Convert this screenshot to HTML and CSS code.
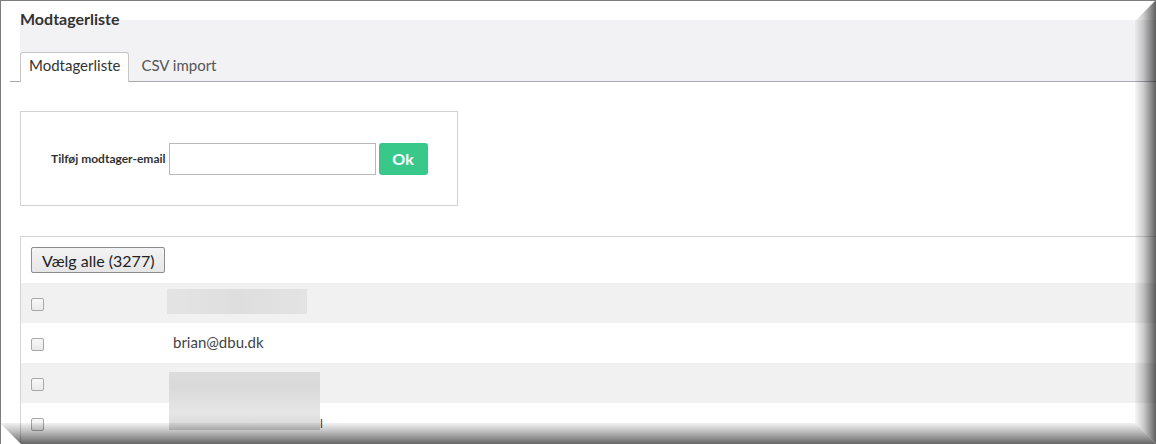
FILE: index.html
```html
<!DOCTYPE html>
<html>
<head>
    <title>Modtagerliste</title>
    <meta charset="utf-8">
    <link rel="stylesheet" href="styles.css">
</head>
<body>
<div class="screen">

    <div class="header">
        <h1 class="title">Modtagerliste</h1>
        <div class="tabs">
            <a class="tab active" href="#">Modtagerliste</a>
            <a class="tab" href="#">CSV import</a>
        </div>
    </div>

    <div class="content">
        <div class="add-box">
            <label for="email">Tilføj modtager-email</label>
            <input id="email" type="text">
            <button class="ok">Ok</button>
        </div>

        <div class="list">
            <button class="select-all">Vælg alle (3277)</button>

            <div class="rows">
                <div class="row">
                    <span class="check"></span>
                    <span class="email"></span>
                </div>
                <div class="row">
                    <span class="check"></span>
                    <span class="email">brian@dbu.dk</span>
                </div>
                <div class="row">
                    <span class="check"></span>
                    <span class="email"></span>
                </div>
                <div class="row">
                    <span class="check"></span>
                    <span class="email"><span class="tail">l</span></span>
                </div>

                <!-- redacted addresses -->
                <div class="blur blur-one"></div>
                <div class="blur blur-two"></div>
            </div>
        </div>
    </div>

    <!-- screenshot frame -->
    <div class="bevel-right"></div>
    <div class="bevel-bottom"></div>
</div>
</body>
</html>
```

FILE: styles.css
```css
body {
    margin: 0;
    padding: 0;
    background: #fff;
    font-family: Lato, "Liberation Sans", sans-serif;
    color: #333;
}

.screen {
    position: relative;
    width: 1156px;
    height: 444px;
    overflow: hidden;
    box-sizing: border-box;
    border-top: 1px solid #7d7d7d;
    border-left: 1px solid #7d7d7d;
}

.header {
    margin-left: 19px;
    background: linear-gradient(#fff 0, #fff 19px, #f2f2f4 19px);
}

.title {
    margin: 0;
    padding-top: 8px;
    font-size: 16px;
    line-height: 20px;
    font-weight: bold;
    color: #333;
}

.tabs {
    display: flex;
    margin: 23px 0 0 -10px;
    padding-left: 10px;
    border-bottom: 1px solid #a9a9b1;
}

.tab {
    display: block;
    padding: 0 8px 4px 8px;
    margin-right: 2px;
    line-height: 25px;
    font-size: 15px;
    color: #555;
    text-decoration: none;
    border: 1px solid transparent;
    border-bottom: none;
    border-radius: 3px 3px 0 0;
    margin-bottom: -1px;
}

.tab + .tab {
    padding-left: 9px;
}

.tab.active {
    background: #fff;
    color: #333;
    border-color: #c6c6c6;
    height: 30px;
    box-sizing: border-box;
    padding-bottom: 0;
}

.content {
    padding-left: 19px;
}

.add-box {
    display: flex;
    align-items: center;
    box-sizing: border-box;
    width: 438px;
    height: 95px;
    margin-top: 29px;
    padding: 0 0 0 30px;
    border: 1px solid #d2d2d2;
}

.add-box label {
    font-size: 12px;
    font-weight: bold;
    color: #333;
    margin-right: 3px;
}

.add-box input {
    box-sizing: border-box;
    width: 207px;
    height: 32px;
    margin: 0;
    border: 1px solid #b9b9b9;
    padding: 0 6px;
    font: 14px Lato, sans-serif;
}

.ok {
    box-sizing: border-box;
    width: 49px;
    height: 32px;
    margin-left: 3px;
    border: none;
    border-radius: 3px;
    background: #37c88a;
    color: #fff;
    font: bold 16px Lato, sans-serif;
}

.list {
    margin-top: 30px;
    border-top: 1px solid #d4d4d4;
    border-left: 1px solid #d4d4d4;
    padding-top: 10px;
}

.select-all {
    display: block;
    box-sizing: border-box;
    height: 26px;
    margin: 0 0 10px 10px;
    padding: 0 10px;
    background: linear-gradient(#f3f3f3, #e6e6e6);
    border: 1px solid #8c8c8c;
    border-radius: 2px;
    font: 16px Lato, sans-serif;
    color: #222;
}

.rows {
    position: relative;
}

.row {
    display: flex;
    align-items: center;
    height: 40px;
    padding: 3px 0 0 10px;
    box-sizing: border-box;
}

.row:nth-child(odd) {
    background: #f1f1f1;
}

.check {
    box-sizing: border-box;
    width: 13px;
    height: 13px;
    border: 1px solid #a8a8a8;
    border-radius: 2px;
    background: linear-gradient(#f8f8f8, #e9e9e9);
}

.email {
    margin-left: 129px;
    font-size: 15px;
    color: #444;
    margin-top: -5px;
}

.tail {
    margin-left: 147px;
    color: #3b3470;
    font-size: 12px;
}

.blur {
    position: absolute;
}

.blur-one {
    left: 146px;
    top: 6px;
    width: 140px;
    height: 25px;
    background: linear-gradient(90deg, #e4e4e4, #dedede 50%, #e3e3e3);
}

.blur-two {
    left: 148px;
    top: 89px;
    width: 151px;
    height: 58px;
    background: linear-gradient(#dcdcdc, #d9d9d9 25%, #e6e6e6 70%, #d6d6d6);
}

.bevel-right {
    position: absolute;
    top: -1px;
    right: 0;
    width: 21px;
    height: 444px;
    background: linear-gradient(90deg, rgba(0, 0, 0, 0.03), rgba(0, 0, 0, 0.2) 40%, rgba(0, 0, 0, 0.62));
    clip-path: polygon(21px 0, 21px 100%, 0 calc(100% - 21px), 0 21px);
}

.bevel-bottom {
    position: absolute;
    left: -1px;
    bottom: 0;
    width: 1156px;
    height: 21px;
    background: linear-gradient(rgba(0, 0, 0, 0.05), rgba(0, 0, 0, 0.25) 40%, rgba(0, 0, 0, 0.6));
    clip-path: polygon(0 0, calc(100% - 21px) 0, 100% 100%, 21px 100%);
}
```
